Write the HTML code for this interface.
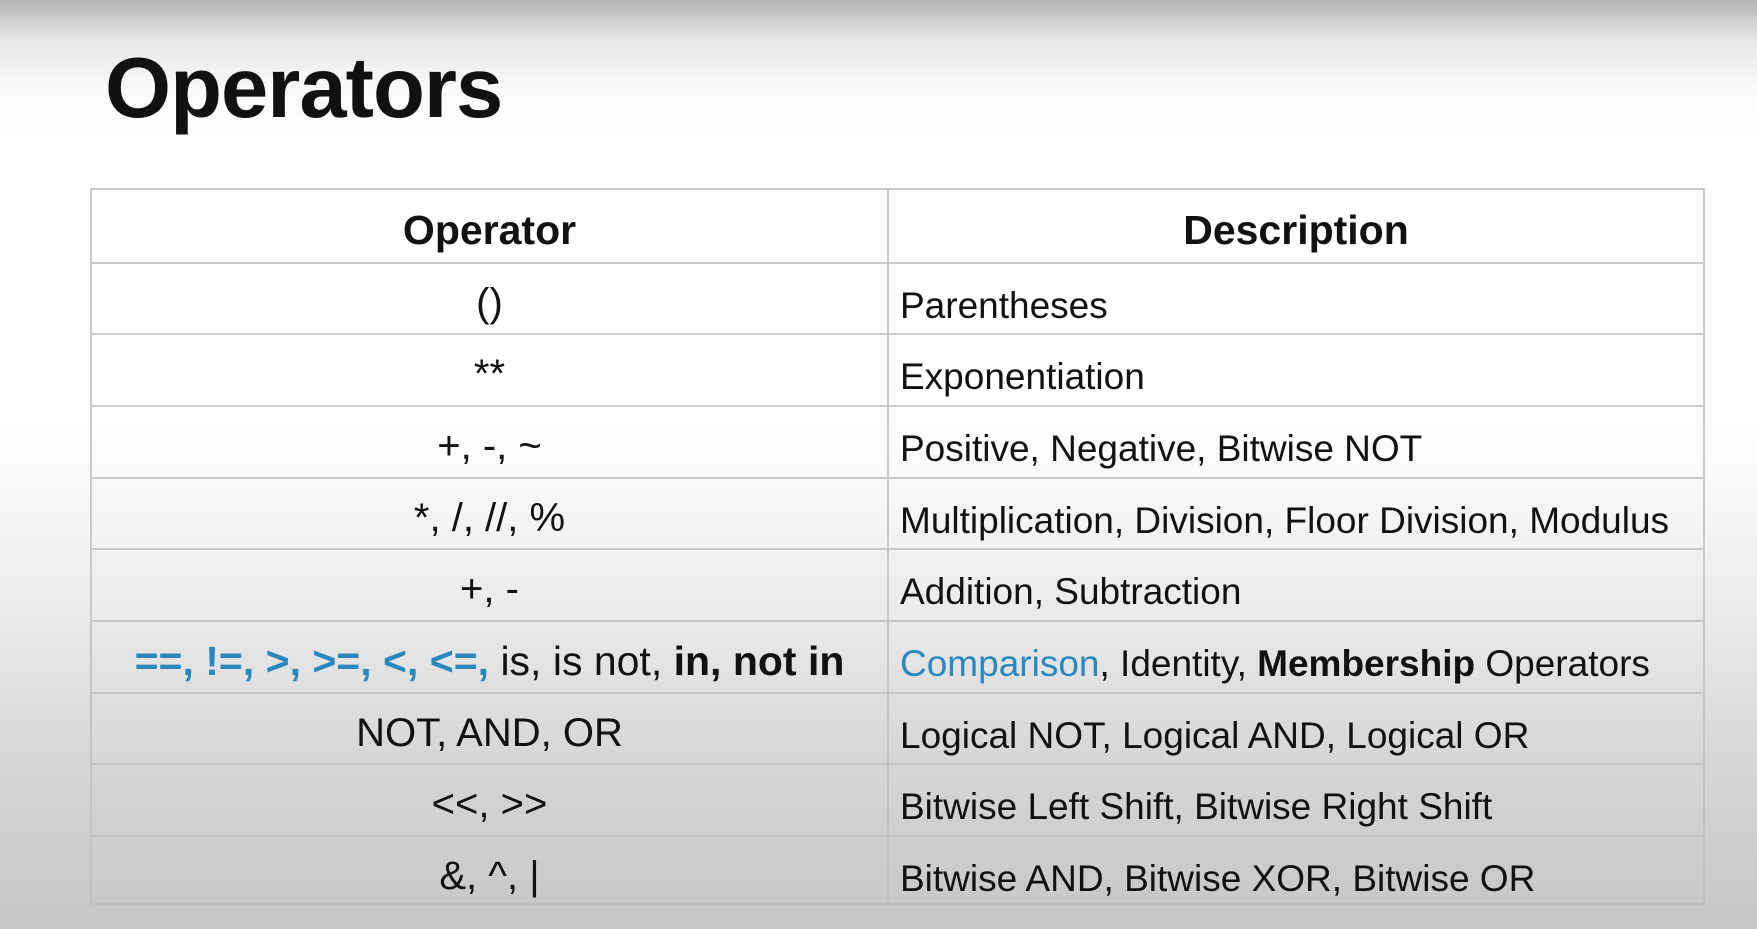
<!DOCTYPE html>
<html><head><meta charset="utf-8"><style>
html,body{margin:0;padding:0}
body{width:1757px;height:929px;overflow:hidden;position:relative;
background:linear-gradient(to bottom,#b4b4b4 0px,#e6e6e6 40px,#fafafa 90px,#ffffff 140px,#ffffff 420px,#ececec 600px,#d6d6d6 760px,#c6c6c6 929px);
font-family:"Liberation Sans",sans-serif;color:#111}
h1{position:absolute;left:105px;top:46px;margin:0;font-size:85px;font-weight:bold;letter-spacing:-1px;line-height:1}
.t{position:absolute;left:90px;top:188px;width:1615px;height:717px;border:2px solid rgba(190,190,190,0.8);box-sizing:border-box}
.r{position:absolute;left:0;right:0;height:72px;border-top:2px solid rgba(190,190,190,0.8);box-sizing:border-box}
.r:first-child{border-top:none}
.vl{position:absolute;left:795px;top:0;bottom:0;border-left:2px solid rgba(190,190,190,0.8)}
.op{position:absolute;left:0;width:795px;top:0;bottom:0;padding-top:8px;box-sizing:border-box;display:flex;align-items:center;justify-content:center;font-size:40px;white-space:nowrap}
.d{position:absolute;left:808px;bottom:7px;font-size:37px;white-space:nowrap;line-height:1.1}
.h{font-weight:bold;font-size:41px}
.hd{position:absolute;left:797px;right:0;top:0;bottom:0;padding-top:8px;display:flex;align-items:center;justify-content:center}
.b{color:#2a88be}
</style></head><body>
<h1>Operators</h1>
<div class="t">
<div class="r" style="top:0"><div class="op h">Operator</div><div class="hd h">Description</div></div>
<div class="r" style="top:72px"><div class="op">()</div><div class="d">Parentheses</div></div>
<div class="r" style="top:143px"><div class="op">**</div><div class="d">Exponentiation</div></div>
<div class="r" style="top:215px"><div class="op">+, -, ~</div><div class="d">Positive, Negative, Bitwise NOT</div></div>
<div class="r" style="top:287px"><div class="op">*, /, //, %</div><div class="d">Multiplication, Division, Floor Division, Modulus</div></div>
<div class="r" style="top:358px"><div class="op">+, -</div><div class="d">Addition, Subtraction</div></div>
<div class="r" style="top:430px"><div class="op" style="font-size:41px"><b class="b">==, !=, &gt;, &gt;=, &lt;, &lt;=,</b>&nbsp;is, is not,&nbsp;<b>in, not in</b></div><div class="d"><span class="b">Comparison</span>, Identity, <b>Membership</b> Operators</div></div>
<div class="r" style="top:502px"><div class="op">NOT, AND, OR</div><div class="d">Logical NOT, Logical AND, Logical OR</div></div>
<div class="r" style="top:573px"><div class="op">&lt;&lt;, &gt;&gt;</div><div class="d">Bitwise Left Shift, Bitwise Right Shift</div></div>
<div class="r" style="top:645px"><div class="op">&amp;, ^, |</div><div class="d">Bitwise AND, Bitwise XOR, Bitwise OR</div></div>
<div class="vl"></div>
</div>
</body></html>
